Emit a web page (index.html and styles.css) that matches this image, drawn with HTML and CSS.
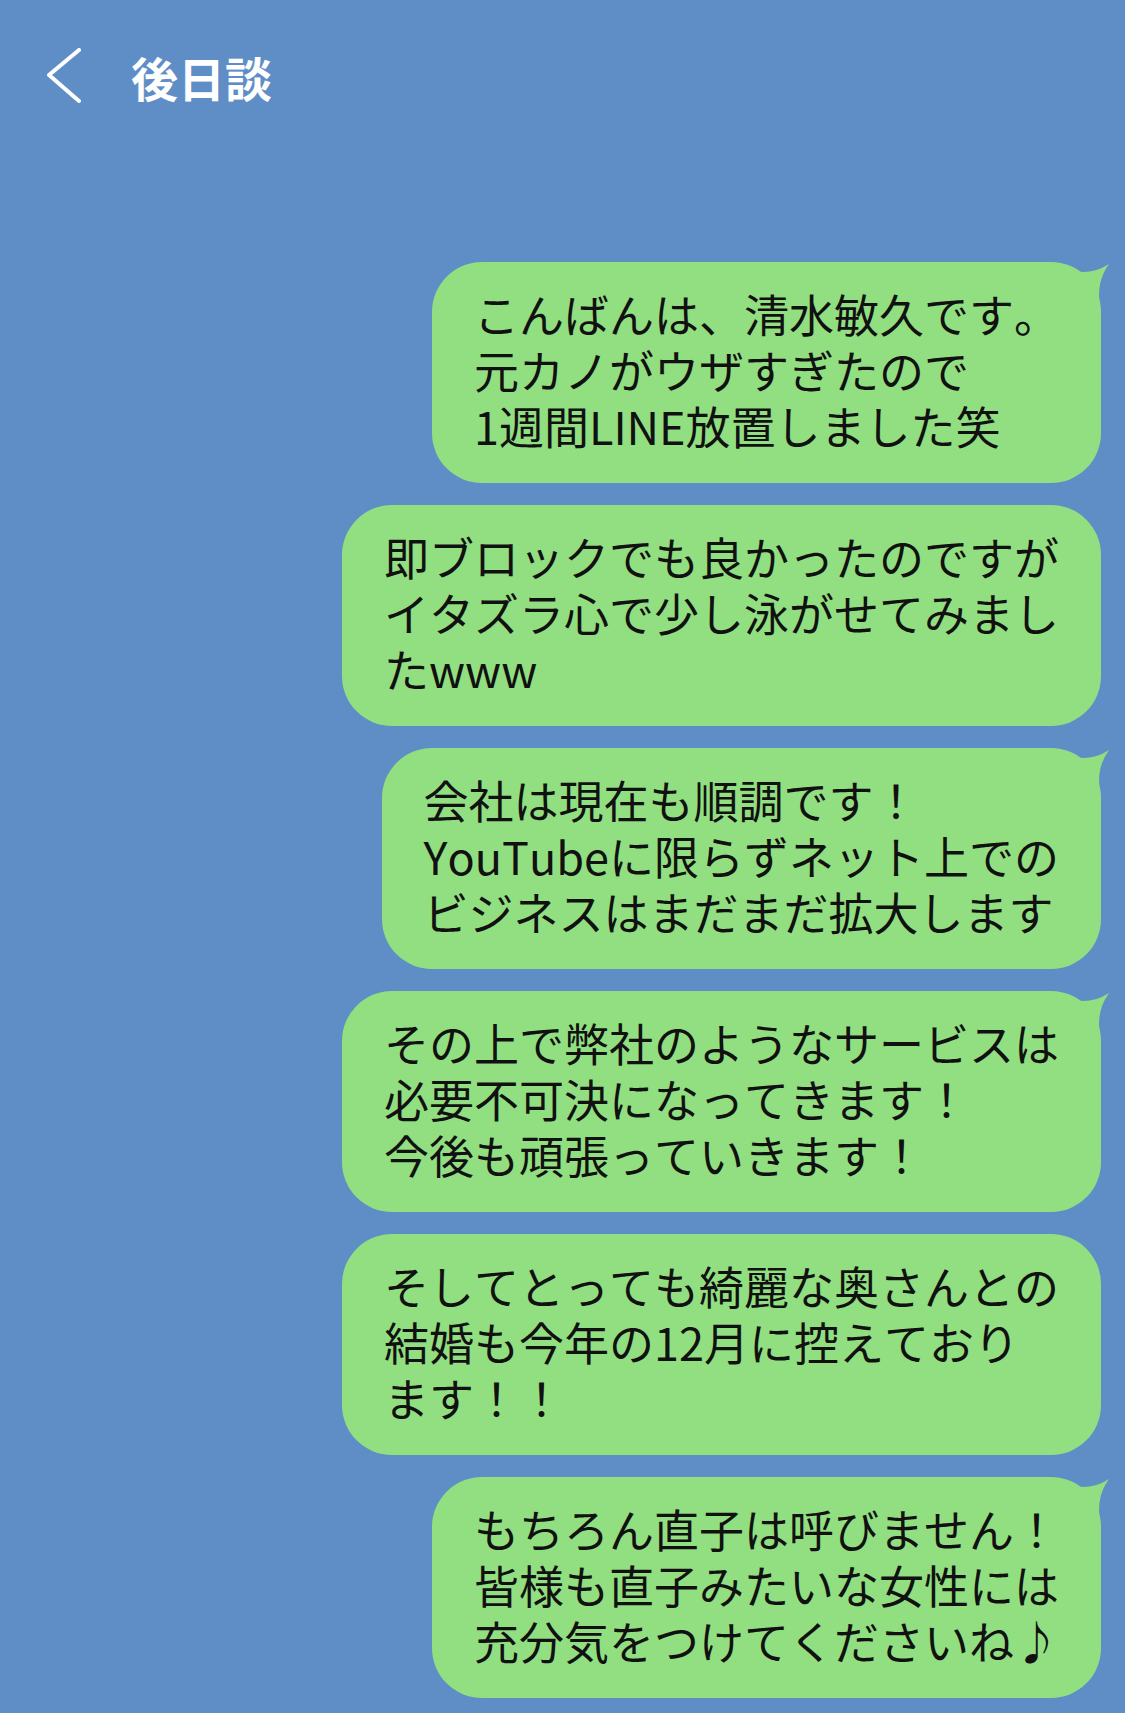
FILE: index.html
```html
<!DOCTYPE html>
<html lang="ja">
<head>
<meta charset="utf-8">
<title>後日談</title>
<link rel="stylesheet" href="styles.css">
</head>
<body>
<div class="screen">
  <header class="topbar">
    <svg class="back" width="34" height="56" viewBox="0 0 34 56" aria-hidden="true">
      <polyline points="32,2 2,27 32,53" fill="none" stroke="#ffffff" stroke-width="4" stroke-linecap="round" stroke-linejoin="round"/>
    </svg>
    <h1 class="title">後日談</h1>
  </header>

  <main class="chat">
    <div class="bubble tail">こんばんは、清水敏久です。<br>元カノがウザすぎたので<br>1週間LINE放置しました笑<svg class="tailmark" width="60" height="46" viewBox="0 0 60 46" aria-hidden="true"><path d="M1 2 Q34 18 58 2 Q45 20 49 43 L1 43 Z"/></svg></div>

    <div class="bubble">即ブロックでも良かったのですが<br>イタズラ心で少し泳がせてみまし<br>たwww</div>

    <div class="bubble tail">会社は現在も順調です！<br>YouTubeに限らずネット上での<br>ビジネスはまだまだ拡大します<svg class="tailmark" width="60" height="46" viewBox="0 0 60 46" aria-hidden="true"><path d="M1 2 Q34 18 58 2 Q45 20 49 43 L1 43 Z"/></svg></div>

    <div class="bubble tail">その上で弊社のようなサービスは<br>必要不可決になってきます！<br>今後も頑張っていきます！<svg class="tailmark" width="60" height="46" viewBox="0 0 60 46" aria-hidden="true"><path d="M1 2 Q34 18 58 2 Q45 20 49 43 L1 43 Z"/></svg></div>

    <div class="bubble">そしてとっても綺麗な奥さんとの<br>結婚も今年の12月に控えており<br>ます！！</div>

    <div class="bubble tail">もちろん直子は呼びません！<br>皆様も直子みたいな女性には<br>充分気をつけてくださいね♪<svg class="tailmark" width="60" height="46" viewBox="0 0 60 46" aria-hidden="true"><path d="M1 2 Q34 18 58 2 Q45 20 49 43 L1 43 Z"/></svg></div>
  </main>
</div>
</body>
</html>
```

FILE: styles.css
```css
html, body {
  margin: 0;
  padding: 0;
}

body {
  background: #5f8ec6;
  font-family: "Noto Sans CJK JP", "Noto Sans", sans-serif;
  color: #111111;
  width: 1125px;
  height: 1713px;
  overflow: hidden;
}

.screen {
  width: 1125px;
  height: 1713px;
  background: #5f8ec6;
}

.topbar {
  display: flex;
  align-items: center;
  height: 152px;
  padding-left: 47px;
  gap: 50px;
  box-sizing: border-box;
}

.back {
  display: block;
  flex: none;
}

.title {
  margin: 0;
  color: #ffffff;
  font-size: 47px;
  font-weight: 700;
  line-height: 1;
  letter-spacing: 0;
}

.chat {
  display: flex;
  flex-direction: column;
  align-items: flex-end;
  gap: 22px;
  padding: 110px 24px 0 0;
}

.bubble {
  position: relative;
  background: #92df81;
  border-radius: 50px;
  padding: 24px 42px 29px 42px;
  font-size: 45px;
  line-height: 56px;
  white-space: nowrap;
  color: #111111;
  font-kerning: none;
  text-spacing-trim: space-all;
}

.tailmark {
  position: absolute;
  top: 0;
  right: -10px;
  fill: #92df81;
}
```
